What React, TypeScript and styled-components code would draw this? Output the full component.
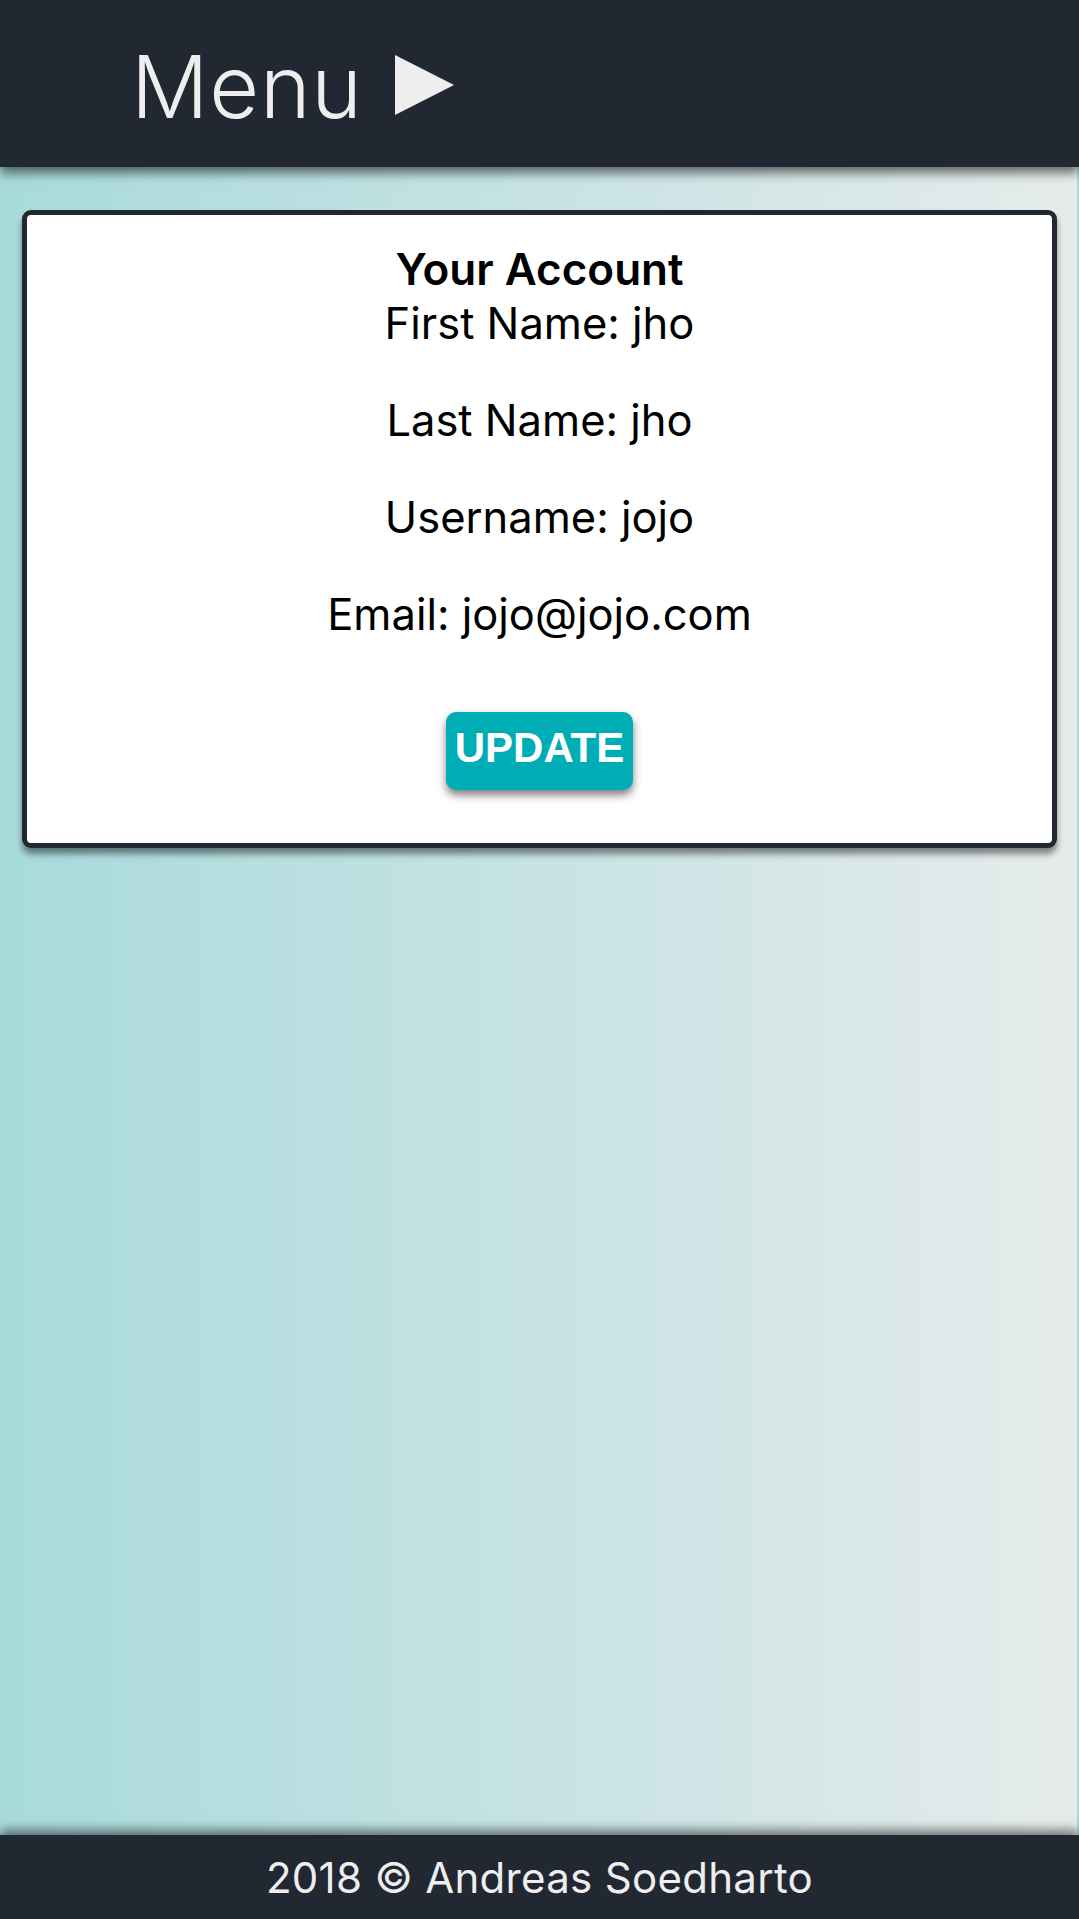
import React from "react"
import styled, { createGlobalStyle } from "styled-components"

const GlobalStyle = createGlobalStyle`
  html, body {
    margin: 0;
    padding: 0;
  }
  body {
    font-family: Inter, "Noto Sans", sans-serif;
    color: #000;
  }
`

const Page = styled.div`
  min-height: 100vh;
  display: flex;
  flex-direction: column;
  background: linear-gradient(to right, #a8dadc, #e6ebeb);
  background-size: calc(100% - 2px) 100%;
  background-repeat: repeat-x;
`

const Header = styled.header`
  position: relative;
  z-index: 2;
  height: 167px;
  flex-shrink: 0;
  background: #222831;
  box-shadow: 0 6px 10px rgba(0, 0, 0, 0.55);
  display: flex;
  align-items: center;
  padding-left: 131px;
  box-sizing: border-box;
`

const MenuButton = styled.div`
  display: flex;
  align-items: center;
  gap: 32px;
  color: #eeeeee;
  font-size: 86px;
  font-weight: 300;
  letter-spacing: 0.8px;
  line-height: 1;
  margin-top: 7px;

  svg {
    width: 59px;
    height: 60px;
    fill: #eeeeee;
    margin-top: -5px;
  }
`

const Main = styled.main`
  flex: 1;
  padding: 43px 22px;
`

const Card = styled.section`
  background: #fff;
  border: 5px solid #222831;
  border-radius: 9px;
  box-shadow: 0 6px 6px rgba(0, 0, 0, 0.45);
  padding: 27px 0 53px;
  display: flex;
  flex-direction: column;
  align-items: center;
  text-align: center;
`

const Title = styled.h2`
  margin: 0;
  font-size: 44px;
  font-weight: 600;
  line-height: 54px;
`

const Field = styled.p`
  margin: 0 0 43px;
  font-size: 43.5px;
  font-weight: 400;
  line-height: 54px;

  &:last-of-type {
    margin-bottom: 71px;
  }
`

const UpdateButton = styled.button`
  border: none;
  border-radius: 10px;
  background: #00adb5;
  color: #fff;
  font-family: "Liberation Sans", Arial, sans-serif;
  font-weight: 700;
  font-size: 42px;
  line-height: 48px;
  padding: 12px 9px 18px;
  box-shadow: 0 5px 8px rgba(0, 0, 0, 0.5);
  cursor: pointer;
`

const Footer = styled.footer`
  position: relative;
  z-index: 2;
  height: 84px;
  flex-shrink: 0;
  background: #222831;
  box-shadow: 0 -5px 10px rgba(0, 0, 0, 0.5);
  color: #eeeeee;
  display: flex;
  align-items: center;
  justify-content: center;
  font-size: 42px;
  font-weight: 400;
  letter-spacing: 0.3px;
`

const user = {
  firstName: "jho",
  lastName: "jho",
  username: "jojo",
  email: "jojo@jojo.com",
}

const App = () => {
  return (
    <>
      <GlobalStyle />
      <Page>
        <Header>
          <MenuButton>
            Menu
            <svg viewBox="0 0 58 59">
              <polygon points="0,0 58,29.5 0,59" />
            </svg>
          </MenuButton>
        </Header>
        <Main>
          <Card>
            <Title>Your Account</Title>
            <Field>First Name: {user.firstName}</Field>
            <Field>Last Name: {user.lastName}</Field>
            <Field>Username: {user.username}</Field>
            <Field>Email: {user.email}</Field>
            <UpdateButton>UPDATE</UpdateButton>
          </Card>
        </Main>
        <Footer>2018 © Andreas Soedharto</Footer>
      </Page>
    </>
  )
}

export default App
